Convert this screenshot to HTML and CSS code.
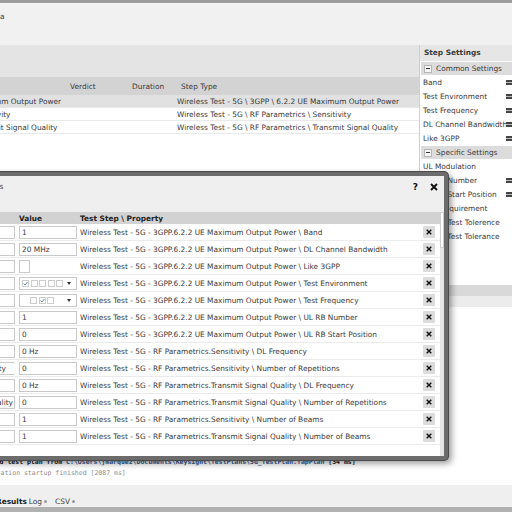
FILE: index.html
```html
<!DOCTYPE html>
<html lang="en">
<head>
    <meta charset="UTF-8">
    <meta name="viewport" content="width=device-width, initial-scale=1.0">
    <title>Test Plan - Parameters</title>
    <link rel="stylesheet" href="styles.css">
</head>
<body>
<div class="app">
    <div class="topbar"></div>
    <div class="toolbar"><span class="toolbar-title">Data</span></div>

    <div class="workspace">
        <div class="plan">
            <div class="plan-band"></div>
            <div class="plan-head">
                <div>Step Name</div>
                <div>Verdict</div>
                <div>Duration</div>
                <div>Step Type</div>
            </div>
            <div class="plan-row selected">
                <div class="name">Maximum Output Power</div>
                <div></div>
                <div></div>
                <div>Wireless Test - 5G \ 3GPP \ 6.2.2 UE Maximum Output Power</div>
            </div>
            <div class="plan-row">
                <div class="name">Sensitivity</div>
                <div></div>
                <div></div>
                <div>Wireless Test - 5G \ RF Parametrics \ Sensitivity</div>
            </div>
            <div class="plan-row">
                <div class="name">Transmit Signal Quality</div>
                <div></div>
                <div></div>
                <div>Wireless Test - 5G \ RF Parametrics \ Transmit Signal Quality</div>
            </div>
        </div>

        <div class="settings">
            <div class="settings-head">Step Settings</div>
            <div class="group"><span class="toggle"></span>Common Settings</div>
            <div class="prop"><span>Band</span><i class="val-icon"></i></div>
            <div class="prop"><span>Test Environment</span><i class="val-icon"></i></div>
            <div class="prop"><span>Test Frequency</span><i class="val-icon"></i></div>
            <div class="prop"><span>DL Channel Bandwidth</span><i class="val-icon"></i></div>
            <div class="prop"><span>Like 3GPP</span><i class="val-icon"></i></div>
            <div class="group"><span class="toggle"></span>Specific Settings</div>
            <div class="prop"><span>UL Modulation</span></div>
            <div class="prop"><span>UL RB Number</span><i class="val-icon"></i></div>
            <div class="prop"><span>UL RB Start Position</span><i class="val-icon"></i></div>
            <div class="prop"><span>Test Requirement</span></div>
            <div class="prop"><span>Upper Test Tolerence</span></div>
            <div class="prop"><span>Lower Test Tolerance</span></div>
        </div>
    </div>

    <div class="log">
        <div class="log-head"></div>
        <div class="log-sel"></div>
        <div class="log-lines">
            <div class="log-line">Loaded test plan from <span class="path">C:\Users\jmarquez\Documents\Keysight\TestPlans\5G_TestPlan.TapPlan</span> [34 ms]</div>
            <div class="log-line muted">Application startup finished [2087 ms]</div>
        </div>
    </div>

    <div class="tabs">
        <span class="tab active">Results</span>
        <span class="tab">Log<i class="dot"></i></span>
        <span class="tab">CSV<i class="dot"></i></span>
    </div>
    <div class="statusbar"></div>

    <!-- parameters dialog -->
    <div class="dialog">
        <div class="dialog-title">
            <span>Parameters</span>
            <span class="help">?</span>
            <svg class="close" width="8" height="8" viewBox="0 0 8 8"><path d="M1 1L7 7M7 1L1 7" stroke="#111" stroke-width="1.9"/></svg>
        </div>
        <div class="dialog-body">
            <div class="ptable">
                <div class="phead">
                    <div>Name</div>
                    <div class="h-value">Value</div>
                    <div class="h-step">Test Step \ Property</div>
                    <div></div>
                </div>

                <div class="prow">
                    <div class="cell-name"><span class="box"></span></div>
                    <div class="cell-value"><span class="box">1</span></div>
                    <div class="cell-step">Wireless Test - 5G - 3GPP.6.2.2 UE Maximum Output Power \ Band</div>
                    <div><button class="del"><svg width="6" height="6" viewBox="0 0 6 6"><path d="M0.7 0.7L5.3 5.3M5.3 0.7L0.7 5.3" stroke="#111" stroke-width="1.4"/></svg></button></div>
                </div>
                <div class="prow">
                    <div class="cell-name"><span class="box"></span></div>
                    <div class="cell-value"><span class="box">20 MHz</span></div>
                    <div class="cell-step">Wireless Test - 5G - 3GPP.6.2.2 UE Maximum Output Power \ DL Channel Bandwidth</div>
                    <div><button class="del"><svg width="6" height="6" viewBox="0 0 6 6"><path d="M0.7 0.7L5.3 5.3M5.3 0.7L0.7 5.3" stroke="#111" stroke-width="1.4"/></svg></button></div>
                </div>
                <div class="prow">
                    <div class="cell-name"><span class="box"></span></div>
                    <div class="cell-value"><span class="box small"></span></div>
                    <div class="cell-step">Wireless Test - 5G - 3GPP.6.2.2 UE Maximum Output Power \ Like 3GPP</div>
                    <div><button class="del"><svg width="6" height="6" viewBox="0 0 6 6"><path d="M0.7 0.7L5.3 5.3M5.3 0.7L0.7 5.3" stroke="#111" stroke-width="1.4"/></svg></button></div>
                </div>
                <div class="prow">
                    <div class="cell-name"><span class="box"></span></div>
                    <div class="cell-value">
                        <span class="box checks">
                            <i class="chk on"><svg width="5" height="5" viewBox="0 0 5 5"><path d="M0.6 2.6L2 4L4.4 1" fill="none" stroke="#5f86ad" stroke-width="1"/></svg></i>
                            <i class="chk"></i><i class="chk"></i><i class="chk"></i><i class="chk"></i>
                            <i class="caret"></i>
                        </span>
                    </div>
                    <div class="cell-step">Wireless Test - 5G - 3GPP.6.2.2 UE Maximum Output Power \ Test Environment</div>
                    <div><button class="del"><svg width="6" height="6" viewBox="0 0 6 6"><path d="M0.7 0.7L5.3 5.3M5.3 0.7L0.7 5.3" stroke="#111" stroke-width="1.4"/></svg></button></div>
                </div>
                <div class="prow">
                    <div class="cell-name"><span class="box"></span></div>
                    <div class="cell-value">
                        <span class="box checks indent">
                            <i class="chk"></i>
                            <i class="chk on"><svg width="5" height="5" viewBox="0 0 5 5"><path d="M0.6 2.6L2 4L4.4 1" fill="none" stroke="#5f86ad" stroke-width="1"/></svg></i>
                            <i class="chk"></i>
                            <i class="caret"></i>
                        </span>
                    </div>
                    <div class="cell-step">Wireless Test - 5G - 3GPP.6.2.2 UE Maximum Output Power \ Test Frequency</div>
                    <div><button class="del"><svg width="6" height="6" viewBox="0 0 6 6"><path d="M0.7 0.7L5.3 5.3M5.3 0.7L0.7 5.3" stroke="#111" stroke-width="1.4"/></svg></button></div>
                </div>
                <div class="prow">
                    <div class="cell-name"><span class="box"></span></div>
                    <div class="cell-value"><span class="box">1</span></div>
                    <div class="cell-step">Wireless Test - 5G - 3GPP.6.2.2 UE Maximum Output Power \ UL RB Number</div>
                    <div><button class="del"><svg width="6" height="6" viewBox="0 0 6 6"><path d="M0.7 0.7L5.3 5.3M5.3 0.7L0.7 5.3" stroke="#111" stroke-width="1.4"/></svg></button></div>
                </div>
                <div class="prow">
                    <div class="cell-name"><span class="box"></span></div>
                    <div class="cell-value"><span class="box">0</span></div>
                    <div class="cell-step">Wireless Test - 5G - 3GPP.6.2.2 UE Maximum Output Power \ UL RB Start Position</div>
                    <div><button class="del"><svg width="6" height="6" viewBox="0 0 6 6"><path d="M0.7 0.7L5.3 5.3M5.3 0.7L0.7 5.3" stroke="#111" stroke-width="1.4"/></svg></button></div>
                </div>
                <div class="prow">
                    <div class="cell-name"><span class="box"></span></div>
                    <div class="cell-value"><span class="box">0 Hz</span></div>
                    <div class="cell-step">Wireless Test - 5G - RF Parametrics.Sensitivity \ DL Frequency</div>
                    <div><button class="del"><svg width="6" height="6" viewBox="0 0 6 6"><path d="M0.7 0.7L5.3 5.3M5.3 0.7L0.7 5.3" stroke="#111" stroke-width="1.4"/></svg></button></div>
                </div>
                <div class="prow">
                    <div class="cell-name"><span class="box open">Sensitivity</span></div>
                    <div class="cell-value"><span class="box">0</span></div>
                    <div class="cell-step">Wireless Test - 5G - RF Parametrics.Sensitivity \ Number of Repetitions</div>
                    <div><button class="del"><svg width="6" height="6" viewBox="0 0 6 6"><path d="M0.7 0.7L5.3 5.3M5.3 0.7L0.7 5.3" stroke="#111" stroke-width="1.4"/></svg></button></div>
                </div>
                <div class="prow">
                    <div class="cell-name"><span class="box"></span></div>
                    <div class="cell-value"><span class="box">0 Hz</span></div>
                    <div class="cell-step">Wireless Test - 5G - RF Parametrics.Transmit Signal Quality \ DL Frequency</div>
                    <div><button class="del"><svg width="6" height="6" viewBox="0 0 6 6"><path d="M0.7 0.7L5.3 5.3M5.3 0.7L0.7 5.3" stroke="#111" stroke-width="1.4"/></svg></button></div>
                </div>
                <div class="prow">
                    <div class="cell-name"><span class="box">Signal Quality</span></div>
                    <div class="cell-value"><span class="box">0</span></div>
                    <div class="cell-step">Wireless Test - 5G - RF Parametrics.Transmit Signal Quality \ Number of Repetitions</div>
                    <div><button class="del"><svg width="6" height="6" viewBox="0 0 6 6"><path d="M0.7 0.7L5.3 5.3M5.3 0.7L0.7 5.3" stroke="#111" stroke-width="1.4"/></svg></button></div>
                </div>
                <div class="prow">
                    <div class="cell-name"><span class="box"></span></div>
                    <div class="cell-value"><span class="box">1</span></div>
                    <div class="cell-step">Wireless Test - 5G - RF Parametrics.Sensitivity \ Number of Beams</div>
                    <div><button class="del"><svg width="6" height="6" viewBox="0 0 6 6"><path d="M0.7 0.7L5.3 5.3M5.3 0.7L0.7 5.3" stroke="#111" stroke-width="1.4"/></svg></button></div>
                </div>
                <div class="prow">
                    <div class="cell-name"><span class="box"></span></div>
                    <div class="cell-value"><span class="box">1</span></div>
                    <div class="cell-step">Wireless Test - 5G - RF Parametrics.Transmit Signal Quality \ Number of Beams</div>
                    <div><button class="del"><svg width="6" height="6" viewBox="0 0 6 6"><path d="M0.7 0.7L5.3 5.3M5.3 0.7L0.7 5.3" stroke="#111" stroke-width="1.4"/></svg></button></div>
                </div>
            </div>
            <div class="vscroll"><div class="thumb"></div></div>
        </div>
    </div>
</div>
</body>
</html>
```

FILE: styles.css
```css
* {
    box-sizing: border-box;
}
html, body {
    margin: 0;
    padding: 0;
}
body {
    width: 512px;
    height: 512px;
    overflow: hidden;
    font-family: "DejaVu Sans", Verdana, sans-serif;
    font-size: 7.4px;
    color: #3a3a3a;
    background: #fff;
}
.app {
    position: relative;
    display: flex;
    flex-direction: column;
    height: 512px;
}
.topbar {
    height: 4px;
    background: #9c9c9c;
    border-bottom: 1px solid #f8f8f8;
}
.toolbar {
    height: 41px;
    background: #f1f1f1;
    padding-top: 8px;
    line-height: 9px;
}
.toolbar-title {
    display: block;
    text-indent: -13px;
    white-space: nowrap;
}

/* test plan + step settings */
.workspace {
    display: flex;
    height: 240px;
}
.plan {
    width: 420px;
    border-right: 1px solid #cfcfcf;
}
.plan-band {
    height: 32px;
    background: #e4e4e4;
}
.plan-head,
.plan-row {
    display: grid;
    grid-template-columns: 66px 62px 49px 1fr;
    align-items: center;
    white-space: nowrap;
}
.plan-head {
    height: 18px;
    background: #d3d3d3;
}
.plan-head > div {
    padding-left: 4px;
}
.plan-head > div:first-child {
    visibility: hidden;
}
.plan-row {
    height: 13px;
    border-bottom: 1px solid #e9e9e9;
}
.plan-row.selected {
    background: #e1e1e1;
}
.plan-row .name {
    overflow: hidden;
    text-indent: -28px;
}
.settings {
    flex: 1;
    background: #fff;
}
.settings-head {
    height: 16px;
    line-height: 16px;
    padding-left: 4px;
    background: #e6e6e6;
    font-weight: bold;
}
.group {
    height: 14px;
    display: flex;
    align-items: center;
    background: #dcdcdc;
    border-top: 1px solid #fff;
    margin-left: 1px;
}
.toggle {
    position: relative;
    width: 8px;
    height: 8px;
    margin: 0 4px 0 3px;
    background: #f4f4f4;
    border: 1px solid #b5b5b5;
}
.toggle::after {
    content: "";
    position: absolute;
    left: 1px;
    top: 2px;
    width: 4px;
    height: 1px;
    background: #333;
}
.prop {
    height: 14px;
    display: grid;
    grid-template-columns: 83px 1fr;
    align-items: center;
    padding-left: 3px;
    white-space: nowrap;
}
.val-icon {
    width: 6px;
    height: 5px;
    background: linear-gradient(#444 0 40%, #bbb 40% 60%, #444 60%);
}

/* log */
.log {
    height: 200px;
    display: flex;
    flex-direction: column;
}
.log-head {
    height: 11px;
    background: #d9d9d9;
}
.log-sel {
    height: 11px;
    background: #ececec;
}
.log-lines {
    margin-top: auto;
    padding-bottom: 6px;
    font-family: "DejaVu Sans Mono", monospace;
    font-size: 6.5px;
    line-height: 11px;
    white-space: nowrap;
}
.log-line {
    text-indent: -20px;
    color: #222;
    font-weight: bold;
}
.log-line .path {
    color: #3a5f98;
}
.log-line.muted {
    text-indent: -23px;
    color: #8e8e8e;
    font-weight: normal;
}
.tabs {
    height: 22px;
    padding-top: 10px;
    display: flex;
    align-items: center;
    background: #efefef;
    white-space: nowrap;
}
.tab {
    display: flex;
    align-items: center;
    gap: 2px;
    margin-right: 8px;
}
.tab.active {
    margin-left: -4px;
    margin-right: 2px;
    font-weight: bold;
    color: #222;
}
.dot {
    width: 3px;
    height: 3px;
    border-radius: 50%;
    background: #9a9a9a;
}
.statusbar {
    height: 5px;
    background: #b1b1b1;
}

/* parameters dialog */
.dialog {
    position: absolute;
    left: -80px;
    top: 172px;
    width: 528px;
    height: 288px;
    display: flex;
    flex-direction: column;
    background: #efefef;
    border: 4px solid #6c6c6c;
    border-radius: 4px;
    box-shadow: 0 0 0 1px #4a4a4a, 3px 3px 7px rgba(0, 0, 0, 0.45);
}
.dialog-title {
    height: 21px;
    display: flex;
    align-items: center;
    padding-left: 37px;
    white-space: nowrap;
}
.help {
    margin-left: auto;
    margin-right: 12px;
    font-weight: bold;
    font-size: 9px;
    color: #111;
}
.close {
    margin-right: 6px;
}
.dialog-body {
    flex: 1;
    display: flex;
    padding-top: 15px;
}
.ptable {
    flex: 1;
    background: #fff;
}
.vscroll {
    width: 4px;
    background: #e4e4e4;
}
.thumb {
    height: 36px;
    background: #fff;
    border: 1px solid #cfcfcf;
}
.phead,
.prow {
    display: grid;
    grid-template-columns: 93px 62px 1fr 20px;
    align-items: center;
    white-space: nowrap;
}
.phead {
    height: 12px;
    background: #d2d2d2;
    font-weight: bold;
    color: #222;
}
.phead > div:first-child {
    visibility: hidden;
}
.h-value {
    padding-left: 2px;
}
.h-step {
    padding-left: 1px;
}
.prow {
    height: 17px;
    border-bottom: 1px solid #ebebeb;
}
.box {
    display: flex;
    align-items: center;
    height: 13px;
    padding: 0 2px;
    background: #fff;
    border: 1px solid #c9c9c9;
    overflow: hidden;
    white-space: nowrap;
}
.cell-name .box {
    margin-right: 2px;
    justify-content: flex-end;
    padding-right: 1px;
}
.cell-name .box.open {
    padding-right: 8px;
    border-right-color: #fff;
}
.cell-value .box {
    width: 58px;
    margin-left: 2px;
}
.cell-value .box.small {
    width: 11px;
    height: 13px;
}
.checks {
    gap: 1.5px;
}
.checks.indent {
    padding-left: 10px;
}
.chk {
    display: flex;
    align-items: center;
    justify-content: center;
    width: 7px;
    height: 7px;
    border: 1px solid #cdcdcd;
}
.caret {
    margin-left: auto;
    margin-right: 3px;
    border-left: 2.5px solid transparent;
    border-right: 2.5px solid transparent;
    border-top: 3px solid #333;
}
.cell-step {
    padding-left: 1px;
}
.del {
    display: flex;
    align-items: center;
    justify-content: center;
    width: 12px;
    height: 12px;
    margin-left: 3px;
    padding: 0;
    border: 0;
    border-radius: 1px;
    background: #dcdcdc;
}
```
